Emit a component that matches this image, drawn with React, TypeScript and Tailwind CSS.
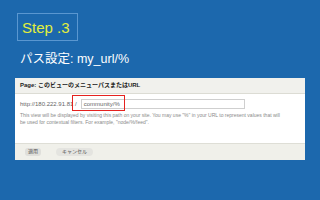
export default function App() {
  return (
    <div className="w-[320px] h-[200px] overflow-hidden bg-[#1c68ad] font-['Liberation_Sans','Noto_Sans_CJK_JP',sans-serif]">
      <div className="pt-[13px] pl-[17px]">
        <div className="w-[61px] h-[28px] border border-[#5a97d0] flex items-center pl-[4px] text-[15px] leading-none text-[#e2ef3c]">
          Step .3
        </div>
      </div>

      <div className="mt-[11px] pl-[20px] text-[12.5px] leading-[14px] text-white">
        パス設定: my_url/%
      </div>

      <div className="mt-[12px] ml-[15px] w-[290px] bg-white flex flex-col">
        <div className="h-[16px] bg-[#f1f1ed] border-b border-[#dcdcd4] px-[5px] flex items-center text-[6px] font-bold text-[#222]">
          Page: このビューのメニューパスまたはURL
        </div>

        <div className="h-[49px] px-[5px] pt-[5px]">
          <div className="relative flex items-center">
            <span className="text-[6px] text-[#666] leading-none">http://180.222.91.81 /</span>
            <div className="ml-[4px] w-[164px] h-[10px] border border-[#cfcfcf] flex items-center pl-[2px] text-[6px] text-[#666]">
              community/%
            </div>
            <div className="absolute left-[52px] top-[-4px] w-[53px] h-[16px] border-[1.5px] border-[#e5221f]" />
          </div>
          <p className="mt-[3px] text-[5px] leading-[7px] text-[#8a8a8a]">
            This view will be displayed by visiting this path on your site. You may use "%" in your URL to represent values that will
            <br />
            be used for contextual filters. For example, "node/%/feed".
          </p>
        </div>

        <div className="h-[17px] bg-[#f0f0ea] border-t border-[#deded6] px-[10px] flex items-center gap-[15px]">
          <div className="h-[8px] px-[3px] rounded-[3px] bg-[#dfdfdb] flex items-center text-[5px] text-[#555]">適用</div>
          <div className="h-[8px] px-[6px] rounded-[4px] bg-[#e4e4e0] flex items-center text-[5px] text-[#555]">キャンセル</div>
        </div>
      </div>
    </div>
  )
}
